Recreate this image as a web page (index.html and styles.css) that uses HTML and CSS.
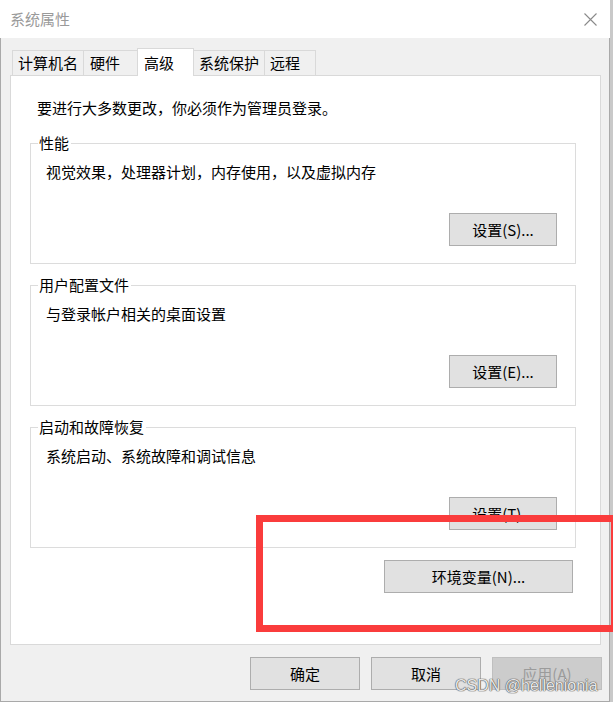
FILE: index.html
```html
<!DOCTYPE html>
<html lang="zh-CN">
<head>
<meta charset="utf-8">
<title>系统属性</title>
<link rel="stylesheet" href="styles.css">
</head>
<body>
<div class="window">
  <div class="titlebar">
    <span class="title">系统属性</span>
    <svg class="close" width="13" height="13" viewBox="0 0 13 13"><path d="M0.5 0.5 L12.5 12.5 M12.5 0.5 L0.5 12.5" stroke="#8a8a8a" stroke-width="1.1" fill="none"/></svg>
  </div>
  <div class="frame">
    <div class="tabs">
      <div class="tab t1">计算机名</div>
      <div class="tab t2">硬件</div>
      <div class="tab active">高级</div>
      <div class="tab t4">系统保护</div>
      <div class="tab t5">远程</div>
    </div>
    <div class="panel">
      <p class="intro">要进行大多数更改，你必须作为管理员登录。</p>
      <fieldset class="group">
        <legend>性能</legend>
        <p class="desc">视觉效果，处理器计划，内存使用，以及虚拟内存</p>
        <div class="actions"><button class="btn">设置(S)...</button></div>
      </fieldset>
      <fieldset class="group">
        <legend>用户配置文件</legend>
        <p class="desc">与登录帐户相关的桌面设置</p>
        <div class="actions"><button class="btn">设置(E)...</button></div>
      </fieldset>
      <fieldset class="group">
        <legend>启动和故障恢复</legend>
        <p class="desc">系统启动、系统故障和调试信息</p>
        <div class="actions"><button class="btn">设置(T)...</button></div>
      </fieldset>
      <div class="env-row"><button class="btn env">环境变量(N)...</button></div>
    </div>
    <div class="footer">
      <button class="btn foot">确定</button>
      <button class="btn foot">取消</button>
      <button class="btn foot" disabled>应用(A)</button>
    </div>
  </div>
</div>
<div class="annot"></div>
<div class="watermark">CSDN @hellenionia</div>
</body>
</html>
```
FILE: styles.css
```css
* { box-sizing: border-box; }
html, body { margin: 0; padding: 0; }
body {
  width: 613px;
  height: 702px;
  background: #c9c9c9;
  font-family: "Noto Sans CJK SC", "Microsoft YaHei", sans-serif;
  font-size: 15px;
  color: #000;
  position: relative;
  overflow: hidden;
}
.window {
  width: 610px;
  height: 702px;
  display: flex;
  flex-direction: column;
  background: #f0f0f0;
}
.titlebar {
  height: 38px;
  flex: none;
  background: #fff;
  display: flex;
  align-items: center;
  justify-content: space-between;
  padding: 0 13px 0 10px;
}
.title {
  color: #9a9a9a;
  font-size: 15px;
  line-height: 20px;
}
.close { display: block; }
.frame {
  flex: 1;
  border-left: 1px solid #a9a9a9;
  border-right: 1px solid #a9a9a9;
  border-bottom: 1px solid #a9a9a9;
  padding-top: 10px;
  display: flex;
  flex-direction: column;
}
.tabs {
  display: flex;
  align-items: flex-end;
  padding-left: 11px;
  height: 27px;
}
.tab {
  height: 25px;
  border: 1px solid #d9d9d9;
  border-bottom: none;
  background: #f0f0f0;
  display: flex;
  align-items: center;
  padding-left: 6px;
  line-height: 20px;
  white-space: nowrap;
}
.t1 { width: 72px; padding-left: 5px; }
.t2 { width: 57px; margin-left: -1px; }
.tab.active {
  width: 57px;
  height: 28px;
  margin-left: -3px;
  margin-right: -2px;
  margin-bottom: -1px;
  background: #fff;
  position: relative;
  z-index: 1;
}
.t4 { width: 74px; margin-left: -1px; padding-left: 7px; }
.t5 { width: 52px; margin-left: -1px; padding-left: 5px; }
.panel {
  margin-left: 9px;
  width: 591px;
  height: 570px;
  flex: none;
  background: #fff;
  border: 1px solid #d9d9d9;
  padding: 22px 0 0 19px;
}
.intro {
  margin: 0 0 16px 7px;
  line-height: 20px;
}
.group {
  margin: 0 0 12px 0;
  width: 546px;
  min-width: 0;
  border: 1px solid #dcdcdc;
  padding: 0 18px 17px 15px;
}
.group legend {
  margin-left: -8px;
  padding: 0 2px 0 1px;
  line-height: 18px;
  font-size: 15px;
}
.desc {
  margin: 10px 0 0 0;
  line-height: 20px;
}
.actions {
  margin-top: 31px;
  display: flex;
  justify-content: flex-end;
}
.btn {
  font-family: "Noto Sans CJK SC", "Microsoft YaHei", sans-serif;
  font-size: 15px;
  color: #000;
  background: #e1e1e1;
  border: 1px solid #adadad;
  border-radius: 0;
  height: 33px;
  width: 108px;
  padding: 0;
  line-height: 20px;
}
.btn:disabled {
  background: #cccccc;
  border-color: #bfbfbf;
  color: #9b9b9b;
}
.env-row {
  margin-top: 8px;
  display: flex;
  justify-content: flex-end;
  padding-right: 27px;
}
.env { width: 189px; }
.footer {
  margin-top: 12px;
  display: flex;
  justify-content: flex-end;
  gap: 11px;
  padding-right: 7px;
}
.foot { width: 110px; }
.annot {
  position: absolute;
  left: 256px;
  top: 515px;
  width: 362px;
  height: 117px;
  border: 7px solid #fa3c3c;
}
.watermark {
  position: absolute;
  left: 455px;
  top: 677px;
  font-family: "Liberation Sans", Arial, sans-serif;
  font-size: 16px;
  line-height: 18px;
  color: rgba(250, 250, 250, 0.9);
  text-shadow: 0 0 1px #5a5a5a, 0 0 1px #5a5a5a, 0 0 1px #5a5a5a;
  white-space: nowrap;
}
```
